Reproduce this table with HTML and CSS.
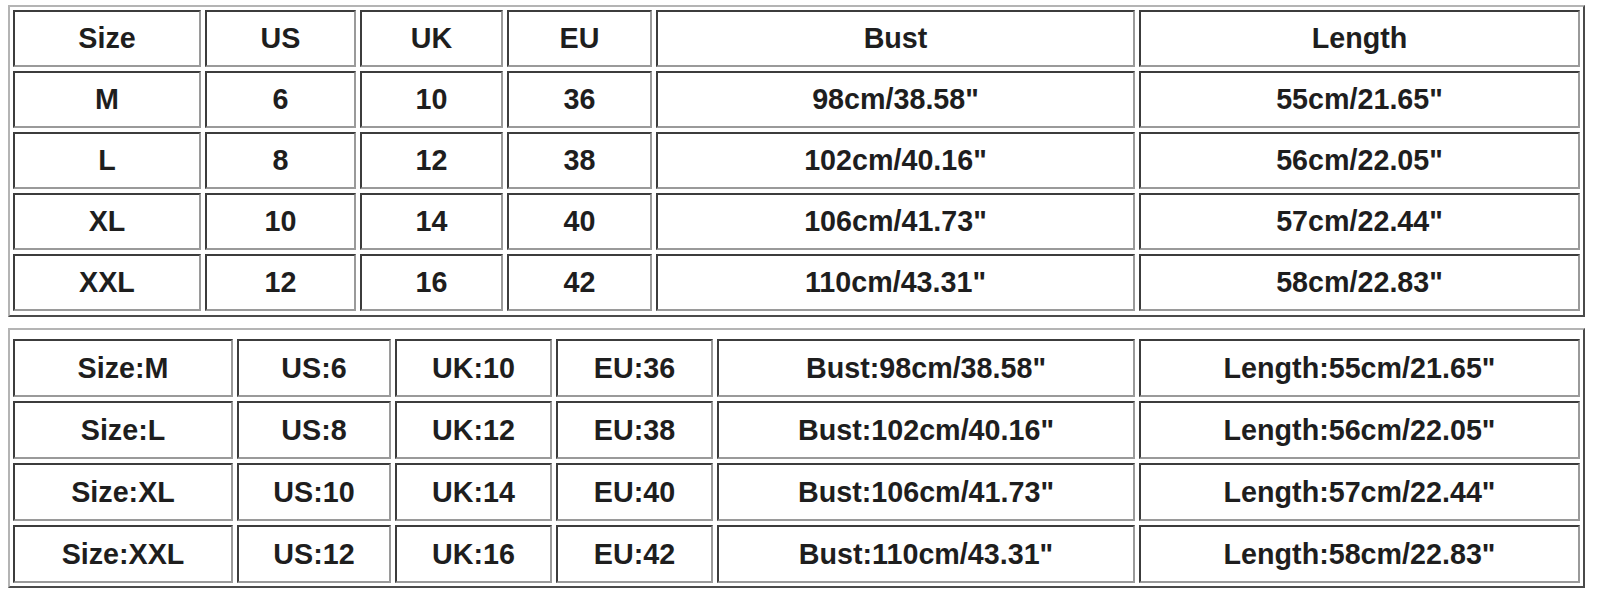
FILE: index.html
```html
<!DOCTYPE html>
<html lang="en">
<head>
<meta charset="utf-8">
<title>Size Chart</title>
<link rel="stylesheet" href="styles.css">
</head>
<body>
<div class="chart chart-a">
  <div class="cell">Size</div><div class="cell">US</div><div class="cell">UK</div><div class="cell">EU</div><div class="cell">Bust</div><div class="cell">Length</div>
  <div class="cell">M</div><div class="cell">6</div><div class="cell">10</div><div class="cell">36</div><div class="cell">98cm/38.58&quot;</div><div class="cell">55cm/21.65&quot;</div>
  <div class="cell">L</div><div class="cell">8</div><div class="cell">12</div><div class="cell">38</div><div class="cell">102cm/40.16&quot;</div><div class="cell">56cm/22.05&quot;</div>
  <div class="cell">XL</div><div class="cell">10</div><div class="cell">14</div><div class="cell">40</div><div class="cell">106cm/41.73&quot;</div><div class="cell">57cm/22.44&quot;</div>
  <div class="cell">XXL</div><div class="cell">12</div><div class="cell">16</div><div class="cell">42</div><div class="cell">110cm/43.31&quot;</div><div class="cell">58cm/22.83&quot;</div>
</div>
<div class="chart chart-b">
  <div class="cell">Size:M</div><div class="cell">US:6</div><div class="cell">UK:10</div><div class="cell">EU:36</div><div class="cell">Bust:98cm/38.58&quot;</div><div class="cell">Length:55cm/21.65&quot;</div>
  <div class="cell">Size:L</div><div class="cell">US:8</div><div class="cell">UK:12</div><div class="cell">EU:38</div><div class="cell">Bust:102cm/40.16&quot;</div><div class="cell">Length:56cm/22.05&quot;</div>
  <div class="cell">Size:XL</div><div class="cell">US:10</div><div class="cell">UK:14</div><div class="cell">EU:40</div><div class="cell">Bust:106cm/41.73&quot;</div><div class="cell">Length:57cm/22.44&quot;</div>
  <div class="cell">Size:XXL</div><div class="cell">US:12</div><div class="cell">UK:16</div><div class="cell">EU:42</div><div class="cell">Bust:110cm/43.31&quot;</div><div class="cell">Length:58cm/22.83&quot;</div>
</div>
</body>
</html>
```
FILE: styles.css
```css
html, body {
  background: #ffffff;
}
body {
  margin: 5px 0 0 8px;
  font-family: "Liberation Sans", Arial, sans-serif;
  font-weight: bold;
  font-size: 28.7px;
  color: #1e1e1e;
}
.chart {
  display: grid;
  border: 2px solid;
  border-color: #b4b4b4 #4a4a4a #4a4a4a #b4b4b4;
  width: max-content;
  gap: 4px;
}
.chart-a {
  padding: 3px 3px 4px 3px;
  grid-auto-rows: 57px;
  grid-template-columns: 188px 151px 143px 145px 479px 441px;
}
.chart-b {
  margin-top: 11px;
  padding: 9px 3px 3px 3px;
  grid-auto-rows: 58px;
  grid-template-columns: 220px 154px 157px 157px 418px 441px;
}
.cell {
  box-sizing: border-box;
  border: 2px solid;
  border-color: #3c3c3c #9a9a9a #9a9a9a #3c3c3c;
  display: flex;
  align-items: center;
  justify-content: center;
  white-space: nowrap;
}
```
